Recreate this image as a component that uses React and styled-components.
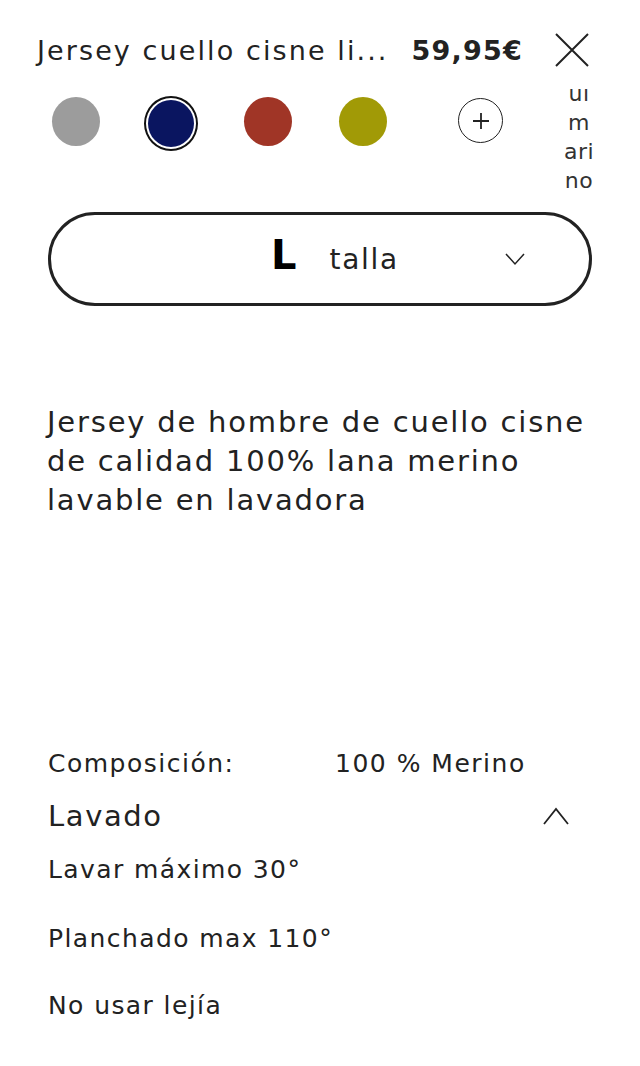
import React from 'react';
import styled, {createGlobalStyle} from 'styled-components';

const GlobalStyle = createGlobalStyle`
    html, body {
        margin: 0;
        padding: 0;
        background: #ffffff;
    }
    body {
        font-family: "DejaVu Sans", "Noto Sans", sans-serif;
        color: #222222;
    }
`

const Page = styled.div`
    width: 640px;
    height: 1066px;
    overflow: hidden;
    display: flex;
    flex-direction: column;
`

const Header = styled.div`
    display: flex;
    align-items: center;
    height: 50px;
    margin-top: 25px;
    padding: 0 50px 0 37px;
`

const Title = styled.div`
    font-size: 27px;
    letter-spacing: 2.1px;
    flex: 1;
    white-space: nowrap;
`

const Price = styled.div`
    font-size: 27px;
    font-weight: bold;
    letter-spacing: 1.2px;
    margin-right: 31px;
`

const Swatches = styled.div`
    display: flex;
    align-items: flex-start;
    height: 124px;
    margin-top: 13px;
    padding: 8px 0 0 52px;
    box-sizing: border-box;
    overflow: hidden;
`

const Swatch = styled.div`
    width: ${p => p.$size}px;
    height: ${p => p.$size + 1}px;
    border-radius: 50%;
    background: ${p => p.$color};
    margin-top: ${p => p.$top || 0}px;
    margin-right: ${p => p.$gap || 0}px;
    flex-shrink: 0;
`

const Ring = styled.div`
    padding: 2px;
    border: 2px solid #111;
    border-radius: 50%;
    margin-right: ${p => p.$gap}px;
    flex-shrink: 0;
`

const PlusCircle = styled.div`
    width: 43px;
    height: 43px;
    margin-top: 2px;
    border: 1.6px solid #222;
    border-radius: 50%;
    display: flex;
    align-items: center;
    justify-content: center;
    flex-shrink: 0;
`

const VerticalLabel = styled.div`
    width: 44px;
    margin-left: 54px;
    margin-top: -17px;
    font-size: 22px;
    line-height: 29px;
    letter-spacing: 0.5px;
    text-align: center;
    color: #333;
`

const Select = styled.div`
    margin: 0 48px 0 48px;
    height: 88px;
    border: 3px solid #222;
    border-radius: 48px;
    display: flex;
    align-items: center;
`

const SizeLetter = styled.div`
    margin-left: 220px;
    font-family: "DejaVu Sans", sans-serif;
    font-size: 40px;
    font-weight: bold;
    color: #000;
    line-height: 1;
    margin-top: -8px;
`

const SelectText = styled.div`
    margin-left: 33px;
    font-size: 28px;
    letter-spacing: 1.7px;
    flex: 1;
`

const Chevron = styled.div`
    margin-right: 64px;
    display: flex;
`

const Description = styled.p`
    margin: 97px 0 0 47px;
    font-size: 29px;
    line-height: 39px;
    letter-spacing: 1.8px;
    white-space: nowrap;
`

const Details = styled.div`
    margin-top: 228px;
    padding-left: 48px;
    display: flex;
    flex-direction: column;
`

const CompRow = styled.div`
    display: flex;
    font-size: 25px;
    letter-spacing: 1.5px;
    height: 30px;
    align-items: center;
`

const CompLabel = styled.div`
    width: 287px;
`

const AccordionHead = styled.div`
    display: flex;
    align-items: center;
    justify-content: space-between;
    height: 40px;
    margin-top: 18px;
    padding-right: 70px;
    font-size: 29px;
    letter-spacing: 1.6px;
`

const Item = styled.div`
    font-size: 25px;
    letter-spacing: 1.4px;
    height: 30px;
    display: flex;
    align-items: center;
    margin-top: ${p => p.$first ? 18 : p.$gap}px;
`

const colors = [
    {color: '#9c9c9c', gap: 44},
    {color: '#0a1560', gap: 46, selected: true},
    {color: '#a03526', gap: 47},
    {color: '#a19a06', gap: 71},
]

export default function App() {
    return (
        <Page>
            <GlobalStyle/>
            <Header>
                <Title>Jersey cuello cisne li...</Title>
                <Price>59,95€</Price>
                <svg width="36" height="36" viewBox="0 0 36 36">
                    <path d="M2 2 L34 34 M34 2 L2 34" stroke="#222" strokeWidth="2" fill="none"/>
                </svg>
            </Header>
            <Swatches>
                {colors.map((c, i) => (
                    c.selected
                        ? <Ring key={i} $gap={c.gap}><Swatch $color={c.color} $size={46}/></Ring>
                        : <Swatch key={i} $color={c.color} $size={48} $top={1} $gap={c.gap}/>
                ))}
                <PlusCircle>
                    <svg width="20" height="20" viewBox="0 0 20 20">
                        <path d="M10 2 V18 M2 10 H18" stroke="#222" strokeWidth="1.8"/>
                    </svg>
                </PlusCircle>
                <VerticalLabel>ui<br/>m<br/>ari<br/>no</VerticalLabel>
            </Swatches>
            <Select>
                <SizeLetter>L</SizeLetter>
                <SelectText>talla</SelectText>
                <Chevron>
                    <svg width="20" height="14" viewBox="0 0 20 14">
                        <path d="M1 2 L10 12 L19 2" stroke="#222" strokeWidth="1.5" fill="none"/>
                    </svg>
                </Chevron>
            </Select>
            <Description>
                Jersey de hombre de cuello cisne<br/>
                de calidad 100% lana merino<br/>
                lavable en lavadora
            </Description>
            <Details>
                <CompRow>
                    <CompLabel>Composición:</CompLabel>
                    <div>100 % Merino</div>
                </CompRow>
                <AccordionHead>
                    <span>Lavado</span>
                    <svg width="28" height="20" viewBox="0 0 28 20">
                        <path d="M2 18 L14 3 L26 18" stroke="#222" strokeWidth="1.8" fill="none"/>
                    </svg>
                </AccordionHead>
                <Item $first>Lavar máximo 30°</Item>
                <Item $gap={39}>Planchado max 110°</Item>
                <Item $gap={37}>No usar lejía</Item>
            </Details>
        </Page>
    );
}
